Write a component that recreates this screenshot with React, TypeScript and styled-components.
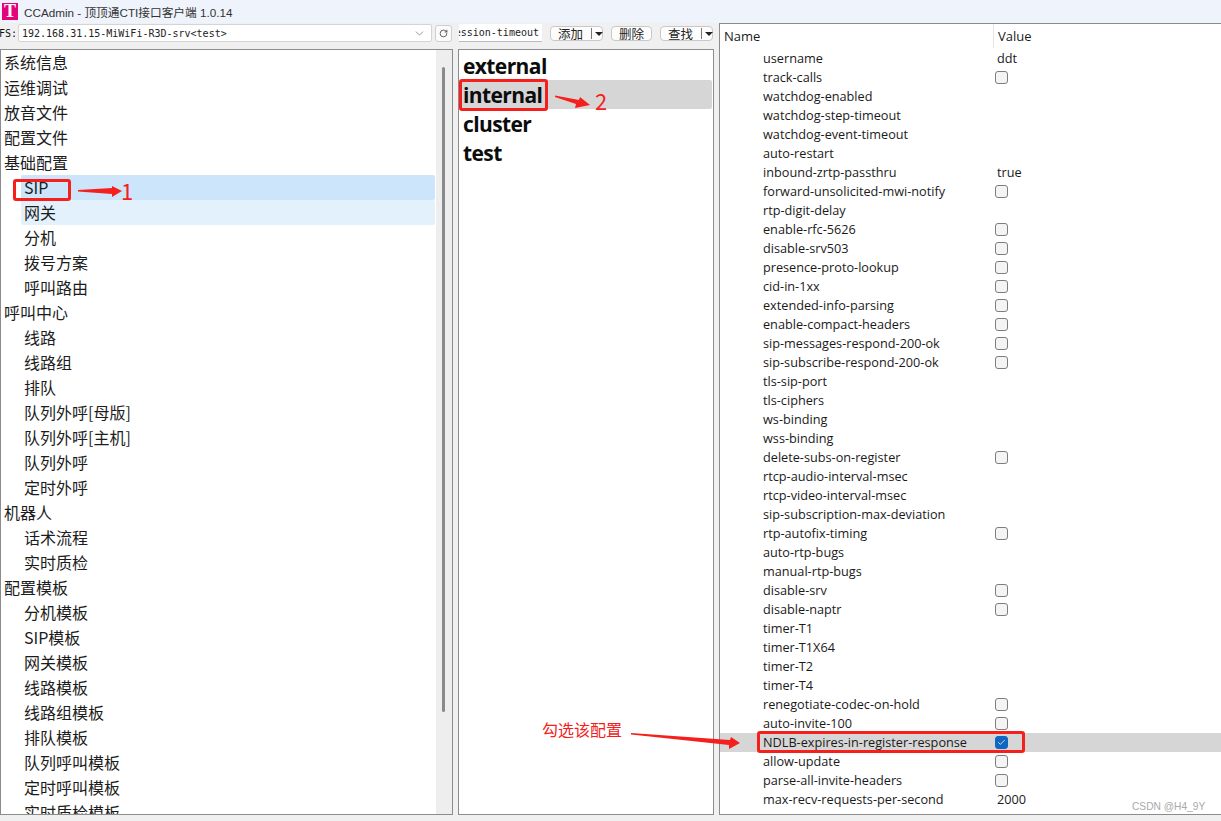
import React from "react";
import styled, { createGlobalStyle } from "styled-components";
import { RotateCw, ChevronDown, Check } from "lucide-react";

const GlobalStyle = createGlobalStyle`
  html, body {
    margin: 0;
    padding: 0;
    background: #f0f0f0;
  }
  body {
    width: 1221px;
    height: 821px;
    overflow: hidden;
    font-family: "Open Sans", "Noto Sans CJK SC", sans-serif;
    color: #111;
  }
`;

const Window = styled.div`
  position: relative;
  width: 1221px;
  height: 821px;
  overflow: hidden;
`;

const TitleBar = styled.div`
  height: 23px;
  display: flex;
  align-items: center;
  background: #eff3fb;
`;

const Logo = styled.div`
  width: 16px;
  height: 17px;
  margin: 0 6px 0 2px;
  background: #e5007d;
  color: #fff;
  font: bold 18px/17px "Liberation Serif", serif;
  text-align: center;
`;

const Title = styled.span`
  font-family: "Liberation Sans", "Noto Sans CJK SC", sans-serif;
  font-size: 11.7px;
  color: #333;
`;

const Body = styled.div`
  display: flex;
  gap: 5px;
  height: 792px;
`;

const LeftColumn = styled.div`
  width: 714px;
  display: flex;
  flex-direction: column;
`;

const Toolbar = styled.div`
  height: 26px;
  padding-top: 1px;
  box-sizing: border-box;
  display: flex;
  align-items: flex-start;
  font: 10px/19px "DejaVu Sans Mono", monospace;
`;

const FsLabel = styled.span`
  width: 18px;
  flex: none;
  text-indent: -1px;
  overflow: hidden;
  white-space: nowrap;
`;

const Combo = styled.div`
  width: 414px;
  height: 18px;
  box-sizing: border-box;
  padding: 0 5px 0 3px;
  display: flex;
  align-items: center;
  justify-content: space-between;
  background: #fff;
  border: 1px solid #d4d4d4;
  border-radius: 2px;
  color: #222;
`;

const IconButton = styled.div`
  width: 17px;
  height: 17px;
  margin: 1px 0 0 3px;
  box-sizing: border-box;
  display: flex;
  align-items: center;
  justify-content: center;
  background: #fbfbfb;
  border: 1px solid #cfcfcf;
  border-radius: 3px;
`;

const FilterInput = styled.div`
  width: 83px;
  height: 18px;
  margin: 0 8px 0 7px;
  padding-right: 3px;
  overflow: hidden;
  display: flex;
  justify-content: flex-end;
  align-items: center;
  background: #fff;
  border-bottom: 1px solid #bbb;
  box-sizing: border-box;
  white-space: nowrap;
  color: #222;
`;

const ToolButton = styled.div<{ $w: number; $menu?: boolean }>`
  width: ${({ $w }) => $w}px;
  height: 15px;
  margin: 2px 8px 0 0;
  box-sizing: border-box;
  padding-left: ${({ $menu }) => ($menu ? "7px" : "0")};
  display: flex;
  align-items: center;
  justify-content: ${({ $menu }) => ($menu ? "flex-start" : "center")};
  background: #fdfdfd;
  border: 1px solid #c8c8c8;
  border-radius: 4px;
  font: 12.5px/13px "Noto Sans CJK SC", sans-serif;
  white-space: nowrap;
  color: #222;
  &:last-child {
    margin-right: 0;
  }
`;

const MenuCaret = styled.span`
  margin-left: 8px;
  padding-left: 3px;
  height: 11px;
  display: flex;
  align-items: center;
  border-left: 1px solid #777;
  &::after {
    content: "";
    border-top: 4px solid #222;
    border-left: 4px solid transparent;
    border-right: 4px solid transparent;
  }
`;

const Lists = styled.div`
  flex: 1;
  display: flex;
  gap: 5px;
  min-height: 0;
`;

const TreePanel = styled.div`
  width: 453px;
  box-sizing: border-box;
  display: flex;
  background: #fff;
  border: 1px solid #8c8c8c;
  overflow: hidden;
`;

const TreeRows = styled.div`
  flex: 1;
  overflow: hidden;
`;

const TreeRow = styled.div<{ $child?: boolean; $tone?: "selected" | "hover" }>`
  height: 25px;
  margin-left: ${({ $child }) => ($child ? "20px" : "0")};
  padding-left: 3px;
  margin-right: 1px;
  border-radius: 2px;
  font: 16px/24px "Noto Sans CJK SC", sans-serif;
  color: #1c1c1c;
  background: ${({ $tone }) =>
    $tone === "selected" ? "#cce5fb" : $tone === "hover" ? "#e3f1fd" : "transparent"};
`;

const ScrollTrack = styled.div`
  width: 16px;
  flex: none;
  background: #eeeeee;
  padding: 17px 0 0 6px;
  box-sizing: border-box;
`;

const ScrollThumb = styled.div`
  width: 3px;
  height: 645px;
  border-radius: 2px;
  background: #8a8a8a;
`;

const ProfilePanel = styled.div`
  width: 256px;
  box-sizing: border-box;
  padding: 1px 1px 0;
  background: #fff;
  border: 1px solid #8c8c8c;
`;

const ProfileRow = styled.div<{ $selected?: boolean }>`
  height: 29px;
  padding-left: 3px;
  border-radius: 2px;
  font-family: "Open Sans", sans-serif;
  font-size: 21px;
  line-height: 30px;
  letter-spacing: -0.6px;
  font-weight: 700;
  color: #0c0c0c;
  background: ${({ $selected }) => ($selected ? "#d6d6d6" : "transparent")};
`;

const PropsPanel = styled.div`
  flex: 1;
  box-sizing: border-box;
  background: #fff;
  border: 1px solid #8c8c8c;
  border-right: 0;
  overflow: hidden;
  font-size: 12.7px;
  color: #1a1a1a;
`;

const PropsHeader = styled.div`
  height: 25px;
  display: grid;
  grid-template-columns: 273px 1fr;
  align-items: start;
  font-size: 13px;
`;

const HeadCell = styled.div`
  height: 24px;
  line-height: 25px;
  padding-left: 4px;
  &:last-child {
    border-left: 1px solid #e5e5e5;
  }
`;

const PropRow = styled.div<{ $selected?: boolean }>`
  height: 19px;
  display: grid;
  grid-template-columns: 277px 1fr;
  align-items: center;
  background: ${({ $selected }) => ($selected ? "#d6d6d6" : "transparent")};
`;

const PropName = styled.div`
  padding-left: 43px;
  white-space: nowrap;
  line-height: 19px;
`;

const PropValue = styled.div`
  line-height: 19px;
`;

const CheckBox = styled.div<{ $checked?: boolean }>`
  width: 13px;
  height: 13px;
  margin-left: -2px;
  box-sizing: border-box;
  display: flex;
  align-items: center;
  justify-content: center;
  border-radius: 3px;
  background: ${({ $checked }) => ($checked ? "#0f67c0" : "#f4f4f4")};
  border: 1px solid ${({ $checked }) => ($checked ? "#0f67c0" : "#7d7d7d")};
`;

const RedBox = styled.div<{ $x: number; $y: number; $w: number; $h: number }>`
  position: absolute;
  left: ${({ $x }) => $x}px;
  top: ${({ $y }) => $y}px;
  width: ${({ $w }) => $w}px;
  height: ${({ $h }) => $h}px;
  box-sizing: border-box;
  border: 3px solid #f5201b;
  border-radius: 3px;
`;

const Arrows = styled.svg`
  position: absolute;
  left: 0;
  top: 0;
  pointer-events: none;
`;

const Note = styled.span<{ $x: number; $y: number; $size: number }>`
  position: absolute;
  left: ${({ $x }) => $x}px;
  top: ${({ $y }) => $y}px;
  font: ${({ $size }) => $size}px/1 "Noto Sans CJK SC", sans-serif;
  color: #f5201b;
`;

const Watermark = styled.span`
  position: absolute;
  left: 1132px;
  top: 800px;
  font: 10.2px/13px "Liberation Sans", sans-serif;
  color: #a9a9a9;
`;

type TreeItem = { label: string; child?: boolean; tone?: "selected" | "hover" };

const treeItems: TreeItem[] = [
  { label: "系统信息" },
  { label: "运维调试" },
  { label: "放音文件" },
  { label: "配置文件" },
  { label: "基础配置" },
  { label: "SIP", child: true, tone: "selected" },
  { label: "网关", child: true, tone: "hover" },
  { label: "分机", child: true },
  { label: "拨号方案", child: true },
  { label: "呼叫路由", child: true },
  { label: "呼叫中心" },
  { label: "线路", child: true },
  { label: "线路组", child: true },
  { label: "排队", child: true },
  { label: "队列外呼[母版]", child: true },
  { label: "队列外呼[主机]", child: true },
  { label: "队列外呼", child: true },
  { label: "定时外呼", child: true },
  { label: "机器人" },
  { label: "话术流程", child: true },
  { label: "实时质检", child: true },
  { label: "配置模板" },
  { label: "分机模板", child: true },
  { label: "SIP模板", child: true },
  { label: "网关模板", child: true },
  { label: "线路模板", child: true },
  { label: "线路组模板", child: true },
  { label: "排队模板", child: true },
  { label: "队列呼叫模板", child: true },
  { label: "定时呼叫模板", child: true },
  { label: "实时质检模板", child: true },
];

// value: string = text, true = ticked box, false = empty box, undefined = blank
type PropItem = { name: string; value?: string | boolean };

const propItems: PropItem[] = [
  { name: "username", value: "ddt" },
  { name: "track-calls", value: false },
  { name: "watchdog-enabled" },
  { name: "watchdog-step-timeout" },
  { name: "watchdog-event-timeout" },
  { name: "auto-restart" },
  { name: "inbound-zrtp-passthru", value: "true" },
  { name: "forward-unsolicited-mwi-notify", value: false },
  { name: "rtp-digit-delay" },
  { name: "enable-rfc-5626", value: false },
  { name: "disable-srv503", value: false },
  { name: "presence-proto-lookup", value: false },
  { name: "cid-in-1xx", value: false },
  { name: "extended-info-parsing", value: false },
  { name: "enable-compact-headers", value: false },
  { name: "sip-messages-respond-200-ok", value: false },
  { name: "sip-subscribe-respond-200-ok", value: false },
  { name: "tls-sip-port" },
  { name: "tls-ciphers" },
  { name: "ws-binding" },
  { name: "wss-binding" },
  { name: "delete-subs-on-register", value: false },
  { name: "rtcp-audio-interval-msec" },
  { name: "rtcp-video-interval-msec" },
  { name: "sip-subscription-max-deviation" },
  { name: "rtp-autofix-timing", value: false },
  { name: "auto-rtp-bugs" },
  { name: "manual-rtp-bugs" },
  { name: "disable-srv", value: false },
  { name: "disable-naptr", value: false },
  { name: "timer-T1" },
  { name: "timer-T1X64" },
  { name: "timer-T2" },
  { name: "timer-T4" },
  { name: "renegotiate-codec-on-hold", value: false },
  { name: "auto-invite-100", value: false },
  { name: "NDLB-expires-in-register-response", value: true },
  { name: "allow-update", value: false },
  { name: "parse-all-invite-headers", value: false },
  { name: "max-recv-requests-per-second", value: "2000" },
];

const profiles = ["external", "internal", "cluster", "test"];

const App: React.FC = () => (
  <Window>
    <GlobalStyle />
    <TitleBar>
      <Logo>T</Logo>
      <Title>CCAdmin - 顶顶通CTI接口客户端 1.0.14</Title>
    </TitleBar>
    <Body>
      <LeftColumn>
        <Toolbar>
          <FsLabel>FS:</FsLabel>
          <Combo>
            <span>192.168.31.15-MiWiFi-R3D-srv&lt;test&gt;</span>
            <ChevronDown size={13} color="#666" strokeWidth={1.25} />
          </Combo>
          <IconButton>
            <RotateCw size={9} color="#333" strokeWidth={2} />
          </IconButton>
          <FilterInput>session-timeout</FilterInput>
          <ToolButton $w={53} $menu>
            添加
            <MenuCaret />
          </ToolButton>
          <ToolButton $w={41}>删除</ToolButton>
          <ToolButton $w={53} $menu>
            查找
            <MenuCaret />
          </ToolButton>
        </Toolbar>
        <Lists>
          <TreePanel>
            <TreeRows>
              {treeItems.map((item) => (
                <TreeRow key={item.label} $child={item.child} $tone={item.tone}>
                  {item.label}
                </TreeRow>
              ))}
            </TreeRows>
            <ScrollTrack>
              <ScrollThumb />
            </ScrollTrack>
          </TreePanel>
          <ProfilePanel>
            {profiles.map((name) => (
              <ProfileRow key={name} $selected={name === "internal"}>
                {name}
              </ProfileRow>
            ))}
          </ProfilePanel>
        </Lists>
      </LeftColumn>
      <PropsPanel>
        <PropsHeader>
          <HeadCell>Name</HeadCell>
          <HeadCell>Value</HeadCell>
        </PropsHeader>
        {propItems.map((item) => (
          <PropRow key={item.name} $selected={item.value === true}>
            <PropName>{item.name}</PropName>
            <PropValue>
              {typeof item.value === "string" && item.value}
              {typeof item.value === "boolean" && (
                <CheckBox $checked={item.value}>
                  {item.value && <Check size={9} color="#fff" strokeWidth={2} />}
                </CheckBox>
              )}
            </PropValue>
          </PropRow>
        ))}
      </PropsPanel>
    </Body>

    <RedBox $x={13} $y={179} $w={58} $h={22} />
    <RedBox $x={459} $y={79} $w={89} $h={32} />
    <RedBox $x={757} $y={731} $w={268} $h={22} />
    <Arrows width="1221" height="821" viewBox="0 0 1221 821">
      <polygon points="78,190 112,188 112,186 122,191 112,197 112,194 78,191.500" fill="#f5201b" />
      <polygon points="555,95.500 579,100 580,97 590,105 575,108 576,104 555,97" fill="#f5201b" />
      <polygon points="631,733 730,740 731,737 740,743 729,749 729,745 631,734.500" fill="#f5201b" />
    </Arrows>
    <Note $x={121} $y={179} $size={22}>1</Note>
    <Note $x={595} $y={89} $size={22}>2</Note>
    <Note $x={542} $y={721} $size={16}>勾选该配置</Note>
    <Watermark>CSDN @H4_9Y</Watermark>
  </Window>
);

export default App;
